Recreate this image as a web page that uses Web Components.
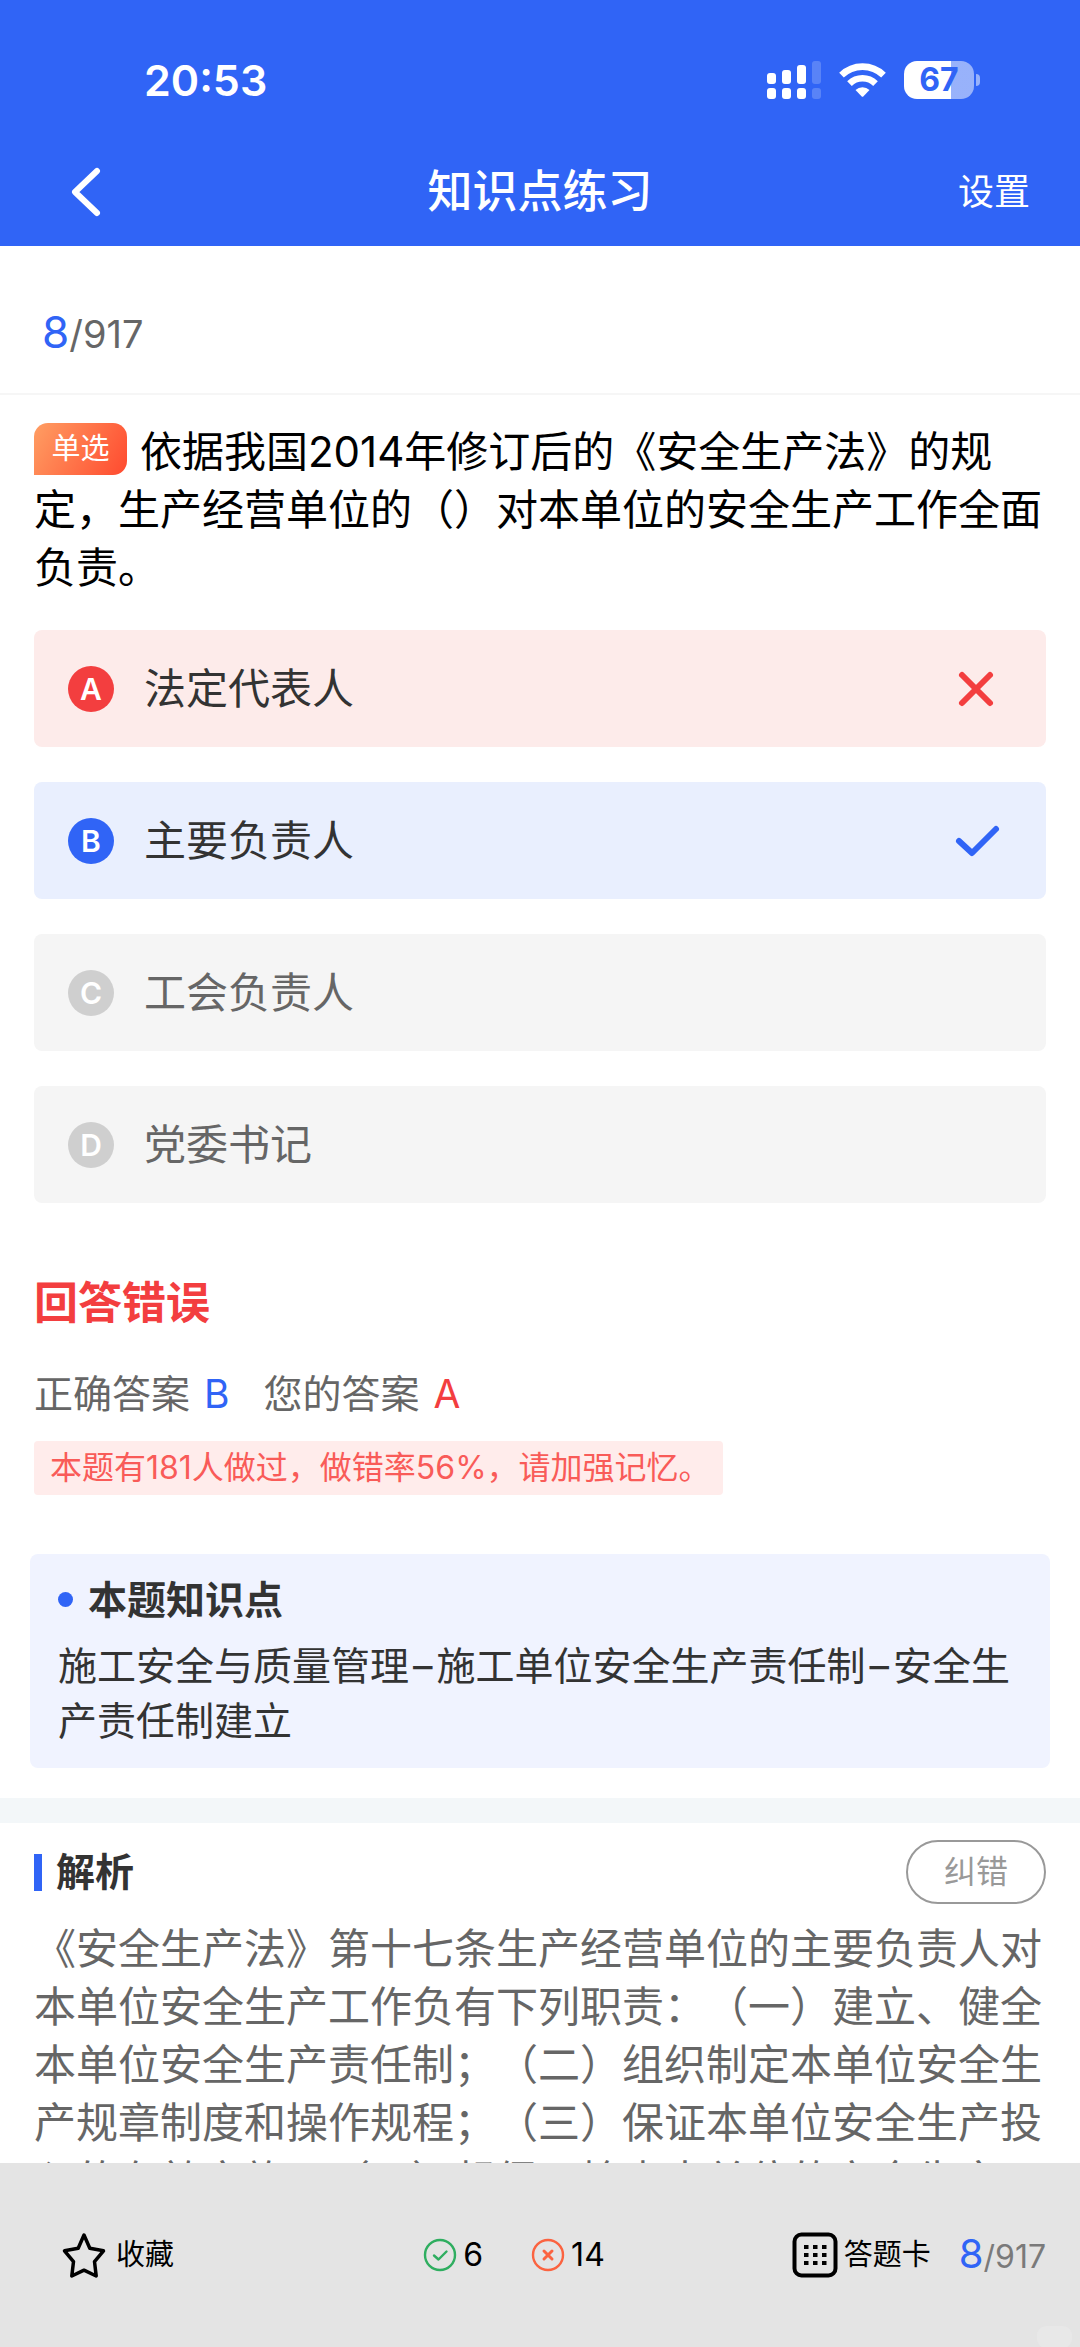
<!DOCTYPE html>
<html lang="zh-CN">
<head>
<meta charset="utf-8">
<meta name="viewport" content="width=device-width, initial-scale=1">
<title>知识点练习</title>
<style>
  :root {
    --blue: #3064f6;
    --red: #f33e3f;
    --ink: #333;
    --muted: #666;
    --gutter: 34px;
  }
  body {
    margin: 0;
    font-family: Inter, "Noto Sans CJK SC", sans-serif;
    color: var(--ink);
    background: #fff;
    text-spacing-trim: space-all;
  }
</style>
</head>
<body>
<quiz-app></quiz-app>

<script>
  const define = (name, html) => {
    const template = document.createElement('template');
    template.innerHTML = html;
    customElements.define(name, class extends HTMLElement {
      constructor() {
        super();
        this.attachShadow({ mode: 'open' }).append(template.content.cloneNode(true));
      }
    });
  };

  define('status-bar', `
    <style>
      :host { display: flex; align-items: center; justify-content: space-between; height: 44px; padding: 58px 100px 0 144px; }
      time { font-size: 43px; line-height: 44px; font-weight: 600; }
      .icons { display: flex; align-items: center; }
      svg { display: block; }
      .wifi { margin: 0 18px; }
      .battery { display: flex; align-items: center; gap: 2px; }
      .level { width: 70px; height: 38px; border-radius: 13px; text-align: center; font-size: 32px; line-height: 38px; font-weight: 700; color: var(--blue);
        background: linear-gradient(90deg, #fff 67%, rgba(255,255,255,.5) 67%); }
      .tip { width: 4px; height: 12px; border-radius: 0 4px 4px 0; background: rgba(255,255,255,.5); }
    </style>
    <time>20:53</time>
    <div class="icons">
      <svg width="54" height="38" viewBox="0 0 54 38" fill="#fff" aria-hidden="true">
        <rect x="0" y="12" width="9" height="11" rx="3"/><rect x="15" y="9" width="9" height="14" rx="3"/>
        <rect x="30" y="4" width="9" height="19" rx="3"/><rect x="45" y="0" width="9" height="23" rx="3" opacity=".2"/>
        <rect x="0" y="27" width="9" height="11" rx="3"/><rect x="15" y="27" width="9" height="11" rx="3"/>
        <rect x="30" y="27" width="9" height="11" rx="3"/><rect x="45" y="27" width="9" height="11" rx="3" opacity=".2"/>
      </svg>
      <svg class="wifi" width="47" height="36" viewBox="0 0 47 36" aria-hidden="true">
        <g fill="none" stroke="#fff" stroke-width="6.6">
          <path d="M2.500 13.200A30 30 0 0 1 44.500 13.200"/>
          <path d="M10.500 21.600A18.500 18.500 0 0 1 36.500 21.600"/>
        </g>
        <path d="M16.500 28A10.500 10.500 0 0 1 30.500 28L24.500 34.200Q23.500 35.200 22.500 34.200Z" fill="#fff"/>
      </svg>
      <div class="battery"><span class="level">67</span><span class="tip"></span></div>
    </div>`);

  define('nav-bar', `
    <style>
      :host { display: grid; grid-template-columns: 1fr auto 1fr; align-items: center; height: 108px; margin-top: 36px; padding: 0 50px; }
      button { border: 0; padding: 0; background: none; color: inherit; font: inherit; cursor: pointer; }
      .back { justify-self: start; padding: 0 16px 0 20px; }
      svg { display: block; }
      h1 { margin: 0; font-size: 45px; line-height: 60px; font-weight: 500; }
      .settings { justify-self: end; font-size: 36px; line-height: 60px; }
    </style>
    <button class="back" aria-label="返回"><svg width="32" height="50" viewBox="0 0 32 50" fill="none" stroke="#fff" stroke-width="6" stroke-linecap="round" stroke-linejoin="round"><path d="M27 4 5 25 27 46"/></svg></button>
    <h1><slot></slot></h1>
    <button class="settings">设置</button>`);

  define('question-count', `
    <style>
      :host { display: block; font-size: 38px; line-height: 60px; color: var(--muted); }
      b { font-size: 44px; font-weight: 400; color: var(--blue); }
      :host([compact]) { font-size: 32px; color: #7a7a7a; }
      :host([compact]) b { font-size: 40px; }
    </style>
    <b><slot name="current"></slot></b>/<slot></slot>`);

  define('question-title', `
    <style>
      :host { display: block; padding: 28px var(--gutter) 33px; font-size: 42px; line-height: 58px; color: #000; }
      .kind { display: inline-block; vertical-align: top; width: 93px; height: 52px; margin-right: 13px; border-radius: 14px 14px 14px 0;
        background: linear-gradient(120deg, #ff9e63, #ff4a2f); color: #fff; font-size: 29px; line-height: 52px; text-align: center; }
    </style>
    <span class="kind"><slot name="kind"></slot></span><slot></slot>`);

  define('answer-option', `
    <style>
      :host { display: block; --tone: #cfcfcf; --fill: #f5f5f5; --text: var(--muted); }
      :host([state="wrong"]) { --tone: var(--red); --fill: #fdebea; --text: var(--ink); }
      :host([state="right"]) { --tone: var(--blue); --fill: #e9effe; --text: var(--ink); }
      button { display: flex; align-items: center; width: 100%; height: 117px; padding: 0 45px 0 34px; border: 0; border-radius: 8px;
        background: var(--fill); color: var(--text); font: inherit; font-size: 42px; line-height: 58px; text-align: left; cursor: pointer; }
      .key { width: 46px; height: 46px; margin-right: 30px; border-radius: 50%; background: var(--tone); color: #fff;
        font-size: 30px; line-height: 46px; font-weight: 600; text-align: center; }
      .label { flex: 1; }
      svg { display: none; fill: none; stroke: var(--tone); stroke-width: 6; stroke-linecap: round; stroke-linejoin: round; }
      :host([state="wrong"]) .cross, :host([state="right"]) .tick { display: block; }
    </style>
    <button>
      <span class="key"><slot name="key"></slot></span>
      <span class="label"><slot></slot></span>
      <svg class="cross" width="48" height="48" viewBox="0 0 48 48" aria-hidden="true"><path d="M9 10 37 38M37 10 9 38"/></svg>
      <svg class="tick" width="48" height="48" viewBox="0 0 48 48" aria-hidden="true"><path d="M6 24 19 36 43 12"/></svg>
    </button>`);

  define('answer-result', `
    <style>
      :host { display: block; padding: 70px var(--gutter) 59px; }
      h2 { margin: 0 0 34px; font-size: 44px; line-height: 60px; font-weight: 700; color: var(--red); }
      .row { display: flex; gap: 34px; margin: 0 0 20px; font-size: 39px; line-height: 54px; color: var(--muted); }
      .row span { display: flex; gap: 14px; }
      b { font-weight: 400; }
      .right { color: var(--blue); }
      .wrong { color: var(--red); }
      .tip { width: fit-content; margin: 0; padding: 0 12px 0 16px; border-radius: 4px; background: #ffeceb; color: #f95b58; font-size: 32px; line-height: 54px; }
    </style>
    <h2>回答错误</h2>
    <p class="row"><span>正确答案 <b class="right">B</b></span><span>您的答案 <b class="wrong">A</b></span></p>
    <p class="tip"><slot></slot></p>`);

  define('knowledge-card', `
    <style>
      :host { display: block; margin: 0 30px 30px; padding: 18px 28px 20px; border-radius: 8px; background: #f0f3ff; font-size: 39px; line-height: 55px; }
      h3 { display: flex; align-items: center; gap: 15px; margin: 0 0 11px; font-size: 39px; line-height: 55px; font-weight: 700; }
      h3::before { content: ""; width: 15px; height: 15px; border-radius: 50%; background: var(--blue); }
      p { margin: 0; }
    </style>
    <h3><slot name="title"></slot></h3>
    <p><slot></slot></p>`);

  define('answer-analysis', `
    <style>
      :host { display: block; padding: 17px var(--gutter) 0; border-top: 25px solid #f3f7f9; }
      header { display: flex; align-items: center; justify-content: space-between; margin-bottom: 16px; }
      h3 { display: flex; align-items: center; gap: 14px; margin: 0; font-size: 39px; line-height: 58px; font-weight: 700; }
      h3::before { content: ""; width: 8px; height: 37px; background: var(--blue); }
      button { width: 140px; height: 64px; padding: 0; border: 2px solid #999; border-radius: 32px; background: none; color: #999; font: inherit; font-size: 32px; line-height: 58px; cursor: pointer; }
      p { margin: 0; font-size: 42px; line-height: 58px; color: var(--muted); }
    </style>
    <header><h3>解析</h3><button>纠错</button></header>
    <p><slot></slot></p>`);

  define('bottom-bar', `
    <style>
      :host { position: relative; display: flex; align-items: center; flex: none; height: 184px; padding: 0 34px 0 62px; box-sizing: border-box; overflow: hidden;
        background: #e4e4e4; color: #000; font-size: 29px; line-height: 60px; }
      button { display: flex; align-items: center; padding: 0; border: 0; background: none; color: inherit; font: inherit; cursor: pointer; }
      svg { display: block; fill: none; stroke: currentColor; }
      .star { flex: 4 1 auto; gap: 10px; }
      .score { display: flex; gap: 48px; font-size: 32px; }
      .score span { display: flex; align-items: center; gap: 6px; }
      .good svg { color: #2fae60; }
      .bad svg { color: #fb6340; }
      .sheet { flex: 3 1 auto; display: flex; align-items: center; justify-content: flex-end; gap: 28px; }
      .sheet button { gap: 6px; }
      .mark { position: absolute; right: 8px; bottom: -1px; width: 35px; height: 22px; border-radius: 9px; background: #e8e8e8; }
    </style>
    <button class="star">
      <svg width="44" height="48" viewBox="0 0 44 48" stroke-width="3.500" stroke-linejoin="round" aria-hidden="true"><path d="M22 4 27.800 17.200 41.500 19.800 32.500 30.600 34.200 45 22 39.200 9.800 45 11.500 30.600 2.500 19.800 16.200 17.200Z"/></svg>
      收藏
    </button>
    <div class="score">
      <span class="good"><svg width="34" height="34" viewBox="0 0 34 34" stroke-width="2.400" stroke-linecap="round" stroke-linejoin="round" aria-hidden="true"><circle cx="17" cy="17" r="15"/><path d="M11 17.500 15.500 21.500 23.500 13.500"/></svg>6</span>
      <span class="bad"><svg width="34" height="34" viewBox="0 0 34 34" stroke-width="2.400" stroke-linecap="round" aria-hidden="true"><circle cx="17" cy="17" r="15"/><path d="M13 13 21 21M21 13 13 21" stroke-width="3"/></svg>14</span>
    </div>
    <div class="sheet">
      <button>
        <svg width="46" height="46" viewBox="0 0 46 46" stroke-width="4" aria-hidden="true"><rect x="2.500" y="2.500" width="41" height="41" rx="7"/><path d="M12 15h23M12 23h23M12 31h23" stroke-dasharray="4.500 4.500"/></svg>
        答题卡
      </button>
      <question-count compact><span slot="current">8</span>917</question-count>
    </div>
    <i class="mark"></i>`);

  define('quiz-app', `
    <style>
      :host { display: flex; flex-direction: column; height: 100vh; }
      .top { flex: none; background: var(--blue); color: #fff; }
      main { flex: 1; min-height: 0; overflow-y: auto; scrollbar-width: none; }
      .progress { padding: 56px 42px 29px; border-bottom: 2px solid #f6f6f6; }
      .options { display: grid; gap: 35px; padding: 0 var(--gutter); }
      .dash { margin: 0 4px; }
    </style>
    <div class="top">
      <status-bar></status-bar>
      <nav-bar>知识点练习</nav-bar>
    </div>
    <main>
      <div class="progress"><question-count><span slot="current">8</span>917</question-count></div>
      <question-title><span slot="kind">单选</span>依据我国2014年修订后的《安全生产法》的规定，生产经营单位的（）对本单位的安全生产工作全面负责。</question-title>
      <div class="options">
        <answer-option state="wrong"><span slot="key">A</span>法定代表人</answer-option>
        <answer-option state="right"><span slot="key">B</span>主要负责人</answer-option>
        <answer-option><span slot="key">C</span>工会负责人</answer-option>
        <answer-option><span slot="key">D</span>党委书记</answer-option>
      </div>
      <answer-result>本题有181人做过，做错率56%，请加强记忆。</answer-result>
      <knowledge-card><span slot="title">本题知识点</span>施工安全与质量管理<span class="dash">–</span>施工单位安全生产责任制<span class="dash">–</span>安全生产责任制建立</knowledge-card>
      <answer-analysis>《安全生产法》第十七条生产经营单位的主要负责人对本单位安全生产工作负有下列职责：（一）建立、健全本单位安全生产责任制；（二）组织制定本单位安全生产规章制度和操作规程；（三）保证本单位安全生产投入的有效实施；（四）督促、检查本单位的安全生产工</answer-analysis>
    </main>
    <bottom-bar></bottom-bar>`);
</script>
</body>
</html>
